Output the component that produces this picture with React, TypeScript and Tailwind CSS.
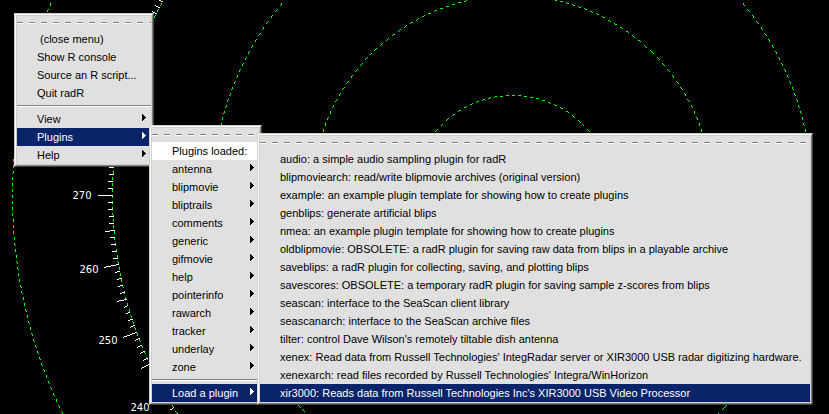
import React from "react";

const CX = 512;
const CY = 195;
const RINGS = [100, 200, 300, 400, 500];

/** Dashes of a ring: three pixels drawn and three skipped along the steeper axis. */
function ringPath(r: number): string {
  const half = Math.ceil(r * Math.SQRT1_2);
  let d = "";
  for (let t = -half; t <= half; t++) {
    if (((t % 6) + 6) % 6 >= 3) continue;
    const s = Math.round(Math.sqrt(r * r - t * t));
    d += `M${CX + t} ${CY - s}h1v1h-1z`;
    d += `M${CX + t} ${CY + s}h1v1h-1z`;
    d += `M${CX - s} ${CY + t}h1v1h-1z`;
    d += `M${CX + s} ${CY + t}h1v1h-1z`;
  }
  return d;
}

/** Bearing ticks around the 400 ring, longer at every fifth and tenth degree. */
function tickPath(): string {
  let d = "";
  for (let deg = 0; deg < 360; deg++) {
    const len = deg % 10 === 0 ? 15 : deg % 5 === 0 ? 10 : 5;
    const a = (deg * Math.PI) / 180;
    const sx = Math.sin(a);
    const sy = -Math.cos(a);
    const x1 = Math.round(CX + 400 * sx);
    const y1 = Math.round(CY + 400 * sy);
    const x2 = Math.round(CX + (400 + len) * sx);
    const y2 = Math.round(CY + (400 + len) * sy);
    const n = Math.max(Math.abs(x2 - x1), Math.abs(y2 - y1));
    for (let i = 0; i < n; i++) {
      const x = Math.round(x1 + ((x2 - x1) * i) / n);
      const y = Math.round(y1 + ((y2 - y1) * i) / n);
      d += `M${x} ${y}h1v1h-1z`;
    }
  }
  return d;
}

const BEARINGS = [270, 260, 250, 240];

function Radar() {
  return (
    <svg className="absolute inset-0 h-full w-full" aria-label="Radar range rings">
      <g shapeRendering="crispEdges">
        {RINGS.map((r) => (
          <path key={r} d={ringPath(r)} fill="#00ff00" />
        ))}
        <path d={tickPath()} fill="#ffffff" />
      </g>
      {BEARINGS.map((b) => {
        const a = (b * Math.PI) / 180;
        return (
          <text
            key={b}
            x={Math.round(CX + 430 * Math.sin(a))}
            y={Math.round(CY + 4 - 424 * Math.cos(a))}
            textAnchor="middle"
            className="fill-white font-['DejaVu_Sans',sans-serif] text-[10px]"
          >
            {b}
          </text>
        );
      })}
    </svg>
  );
}

function TearOff() {
  return (
    <div className="h-[14px] pt-[6px]" aria-hidden="true">
      <div className="h-px bg-[repeating-linear-gradient(90deg,#808080_0_6px,transparent_6px_12px)]" />
      <div className="h-px bg-[repeating-linear-gradient(90deg,#ffffff_0_6px,transparent_6px_11px,#ffffff_11px_12px)]" />
    </div>
  );
}

function Separator() {
  return (
    <div className="flex h-2 flex-col justify-center" role="separator">
      <div className="h-px bg-[#808080]" />
      <div className="h-px bg-white" />
    </div>
  );
}

type ItemProps = { label: string; sub?: boolean; active?: boolean; indent?: boolean; title?: boolean };

function Item({ label, sub, active, indent, title }: ItemProps) {
  const tone = active ? "bg-[#0a246a] text-white" : title ? "bg-white text-black" : "text-black";
  return (
    <button
      type="button"
      role="menuitem"
      aria-haspopup={sub ? "menu" : undefined}
      className={`flex h-[18px] w-full items-center justify-between pr-[5px] text-left whitespace-nowrap ${
        indent ? "pl-[23px]" : "pl-5"
      } ${tone}`}
    >
      <span>{label}</span>
      {sub && (
        <svg
          width="4"
          height="7"
          viewBox="0 0 4 7"
          className="mb-[3px] fill-current"
          shapeRendering="crispEdges"
          aria-hidden="true"
        >
          <path d="M0 0h1v1h1v1h1v1h1v1h-1v1h-1v1h-1v1h-1z" />
        </svg>
      )}
    </button>
  );
}

function Menu({ place, label, children }: { place: string; label: string; children: React.ReactNode }) {
  return (
    <div
      role="menu"
      aria-label={label}
      className={`absolute border border-t-[#d4d0c8] border-r-[#404040] border-b-[#404040] border-l-[#d4d0c8] ${place}`}
    >
      <div className="border border-t-white border-r-[#808080] border-b-[#808080] border-l-white">
        <div className="border border-[#d4d0c8] bg-[#e0e0e0]">
          <TearOff />
          {children}
        </div>
      </div>
    </div>
  );
}

const LOADED = [
  "antenna",
  "blipmovie",
  "bliptrails",
  "comments",
  "generic",
  "gifmovie",
  "help",
  "pointerinfo",
  "rawarch",
  "tracker",
  "underlay",
  "zone",
];

const AVAILABLE = [
  "audio: a simple audio sampling plugin for radR",
  "blipmoviearch: read/write blipmovie archives (original version)",
  "example: an example plugin template for showing how to create plugins",
  "genblips: generate artificial blips",
  "nmea: an example plugin template for showing how to create plugins",
  "oldblipmovie: OBSOLETE: a radR plugin for saving raw data from blips in a playable archive",
  "saveblips: a radR plugin for collecting, saving, and plotting blips",
  "savescores: OBSOLETE: a temporary radR plugin for saving sample z-scores from blips",
  "seascan: interface to the SeaScan client library",
  "seascanarch: interface to the SeaScan archive files",
  "tilter: control Dave Wilson's remotely tiltable dish antenna",
  "xenex: Read data from Russell Technologies' IntegRadar server or XIR3000 USB radar digitizing hardware.",
  "xenexarch: read files recorded by Russell Technologies' Integra/WinHorizon",
  "xir3000: Reads data from Russell Technologies Inc's XIR3000 USB Video Processor",
];

export default function App() {
  return (
    <main className="relative h-screen w-full overflow-hidden bg-black font-['Liberation_Sans',Arial,sans-serif] text-[11px] leading-[18px]">
      <Radar />
      <Menu label="radR" place="top-[13px] left-[14px] w-[140px]">
        <Item label="(close menu)" indent />
        <Item label="Show R console" />
        <Item label="Source an R script..." />
        <Item label="Quit radR" />
        <Separator />
        <Item label="View" sub />
        <Item label="Plugins" sub active />
        <Item label="Help" sub />
      </Menu>
      <Menu label="Plugins" place="top-[125px] left-[149px] w-[113px]">
        <Item label="Plugins loaded:" title />
        {LOADED.map((name) => (
          <Item key={name} label={name} sub />
        ))}
        <Separator />
        <Item label="Load a plugin" sub active />
      </Menu>
      <Menu label="Load a plugin" place="top-[133px] left-[257px] w-[556px]">
        {AVAILABLE.map((text) => (
          <Item key={text} label={text} active={text.startsWith("xir3000")} />
        ))}
      </Menu>
    </main>
  );
}
